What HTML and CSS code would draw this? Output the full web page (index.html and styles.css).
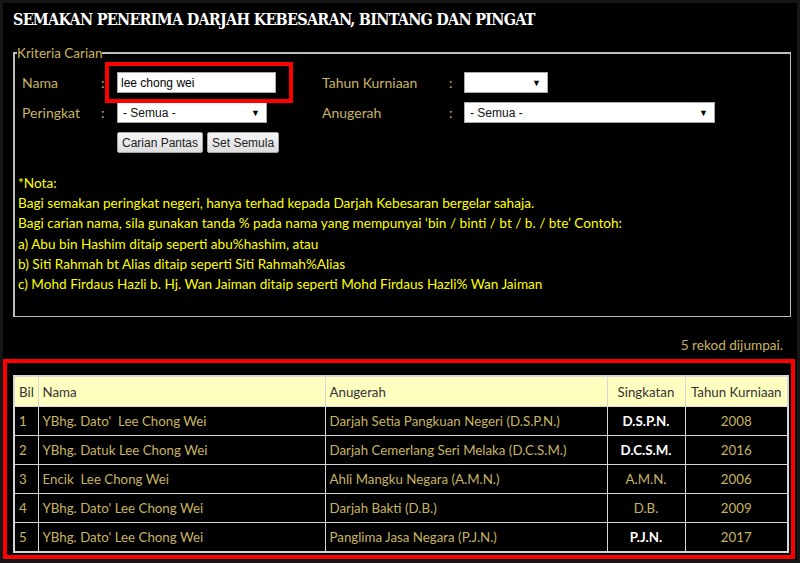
FILE: index.html
```html
<!DOCTYPE html>
<html lang="ms">
<head>
    <meta charset="UTF-8">
    <title>Semakan Penerima Darjah Kebesaran</title>
    <link rel="stylesheet" href="styles.css">
</head>
<body>
<div class="page">
    <h1>SEMAKAN PENERIMA DARJAH KEBESARAN, BINTANG DAN PINGAT</h1>

    <fieldset class="criteria">
        <legend>Kriteria Carian</legend>
        <div class="form-grid">
            <span class="lbl">Nama</span>
            <span class="colon">:</span>
            <span class="field mark"><input type="text" class="txt" value="lee chong wei"></span>
            <span class="lbl">Tahun Kurniaan</span>
            <span class="colon">:</span>
            <span class="field"><span class="sel sel-year"><span></span><i>&#9660;</i></span></span>

            <span class="lbl">Peringkat</span>
            <span class="colon">:</span>
            <span class="field"><span class="sel sel-level"><span>- Semua -</span><i>&#9660;</i></span></span>
            <span class="lbl">Anugerah</span>
            <span class="colon">:</span>
            <span class="field"><span class="sel sel-award"><span>- Semua -</span><i>&#9660;</i></span></span>

            <span></span>
            <span></span>
            <span class="field buttons">
                <button type="button">Carian Pantas</button>
                <button type="button">Set Semula</button>
            </span>
        </div>

        <div class="nota">
            <p>*Nota:</p>
            <p>Bagi semakan peringkat negeri, hanya terhad kepada Darjah Kebesaran bergelar sahaja.</p>
            <p>Bagi carian nama, sila gunakan tanda % pada nama yang mempunyai ‘bin / binti / bt / b. / bte’ Contoh:</p>
            <p>a) Abu bin Hashim ditaip seperti abu%hashim, atau</p>
            <p>b) Siti Rahmah bt Alias ditaip seperti Siti Rahmah%Alias</p>
            <p>c) Mohd Firdaus Hazli b. Hj. Wan Jaiman ditaip seperti Mohd Firdaus Hazli% Wan Jaiman</p>
        </div>
    </fieldset>

    <div class="count">5 rekod dijumpai.</div>

    <div class="result-box">
        <table class="result">
            <colgroup>
                <col class="w-bil">
                <col class="w-nama">
                <col class="w-anugerah">
                <col class="w-singkatan">
                <col>
            </colgroup>
            <thead>
                <tr>
                    <th>Bil</th>
                    <th>Nama</th>
                    <th>Anugerah</th>
                    <th class="c-center">Singkatan</th>
                    <th class="c-center">Tahun Kurniaan</th>
                </tr>
            </thead>
            <tbody>
                <tr>
                    <td>1</td>
                    <td>YBhg. Dato'&nbsp; Lee Chong Wei</td>
                    <td>Darjah Setia Pangkuan Negeri (D.S.P.N.)</td>
                    <td class="c-center strong">D.S.P.N.</td>
                    <td class="c-center">2008</td>
                </tr>
                <tr>
                    <td>2</td>
                    <td>YBhg. Datuk Lee Chong Wei</td>
                    <td>Darjah Cemerlang Seri Melaka (D.C.S.M.)</td>
                    <td class="c-center strong">D.C.S.M.</td>
                    <td class="c-center">2016</td>
                </tr>
                <tr>
                    <td>3</td>
                    <td>Encik&nbsp; Lee Chong Wei</td>
                    <td>Ahli Mangku Negara (A.M.N.)</td>
                    <td class="c-center">A.M.N.</td>
                    <td class="c-center">2006</td>
                </tr>
                <tr>
                    <td>4</td>
                    <td>YBhg. Dato' Lee Chong Wei</td>
                    <td>Darjah Bakti (D.B.)</td>
                    <td class="c-center">D.B.</td>
                    <td class="c-center">2009</td>
                </tr>
                <tr>
                    <td>5</td>
                    <td>YBhg. Dato' Lee Chong Wei</td>
                    <td>Panglima Jasa Negara (P.J.N.)</td>
                    <td class="c-center strong">P.J.N.</td>
                    <td class="c-center">2017</td>
                </tr>
            </tbody>
        </table>
    </div>
</div>
</body>
</html>
```

FILE: styles.css
```css
html, body { margin: 0; padding: 0; background: #000; }
body { font-family: Lato, "Open Sans", sans-serif; font-size: 14px; color: #c8b462; }

.page { width: 794px; height: 557px; border: 3px solid #161616; overflow: hidden; }

h1 { margin: 0; padding: 7px 0 0 10px; height: 36px; box-sizing: border-box; font-family: "DejaVu Serif", "Liberation Serif", serif; font-stretch: condensed; font-weight: bold; font-size: 16px; letter-spacing: -0.75px; color: #fff; white-space: nowrap; }

.criteria { margin: 7px 6px 0 10px; padding: 0 0 0 7px; border: 2px solid #bdbdbd; border-width: 2px 1px 1px 2px; height: 268px; }
.criteria legend { padding: 0; margin-left: -5px; color: #c8b462; font-size: 13.5px; line-height: 14px; }

.form-grid { display: grid; grid-template-columns: 79px 16px 205px 127px 15px auto; grid-auto-rows: 21px; row-gap: 9px; align-items: center; margin-top: 12px; }
.lbl, .colon { color: #c8b462; }
.field { display: flex; align-items: center; }

.mark { position: relative; width: 159px; }
.mark::after { content: ""; position: absolute; left: -12px; right: -17px; top: -10px; bottom: -10px; border: 4px solid #f00; }

.txt { width: 159px; height: 21px; box-sizing: border-box; margin: 0; border: 1px solid #a9a9a9; padding: 1px 3px; font-family: "Liberation Sans", Arial, sans-serif; font-size: 12px; color: #000; outline: none; }

.sel { display: flex; justify-content: space-between; align-items: center; height: 21px; box-sizing: border-box; background: #fff; border: 1px solid #a9a9a9; padding: 0 6px 0 5px; font-family: "Liberation Sans", Arial, sans-serif; font-size: 12px; color: #111; }
.sel i { font-style: normal; font-size: 9px; color: #000; }
.sel-year { width: 84px; }
.sel-level { width: 150px; }
.sel-award { width: 251px; }

.buttons { gap: 4px; }
.buttons button { height: 21px; margin: 0; padding: 0 4px; background: linear-gradient(#f6f6f6, #dddddd); border: 1px solid #a6a6a6; border-radius: 2px; font-family: "Liberation Sans", Arial, sans-serif; font-size: 12px; color: #222; }

.nota { margin-top: 20px; margin-left: -4px; color: #ffff00; font-size: 13.6px; line-height: 20.2px; }
.nota p { margin: 0; }

.count { margin-top: 19px; padding-right: 14px; text-align: right; line-height: 18px; font-size: 13.6px; }

.result-box { margin: 5px 2px 0 0; border: 4px solid #f00; padding: 12px 2px 0 6px; height: 200px; box-sizing: border-box; }
.result { width: 100%; table-layout: fixed; border-collapse: collapse; border: 2px solid #d6d6d6; font-size: 13.3px; }
.result th, .result td { border: 1px solid #d6d6d6; padding: 0 4px; height: 28px; text-align: left; white-space: nowrap; overflow: hidden; }
.result th { height: 29px; background: #ffffc0; color: #333; font-weight: normal; }
.result td { color: #c8b462; }
.w-bil { width: 24px; }
.w-nama { width: 287px; }
.w-anugerah { width: 282px; }
.w-singkatan { width: 78px; }
.result .c-center { text-align: center; }
.result .strong { color: #fff; font-weight: bold; }
```
